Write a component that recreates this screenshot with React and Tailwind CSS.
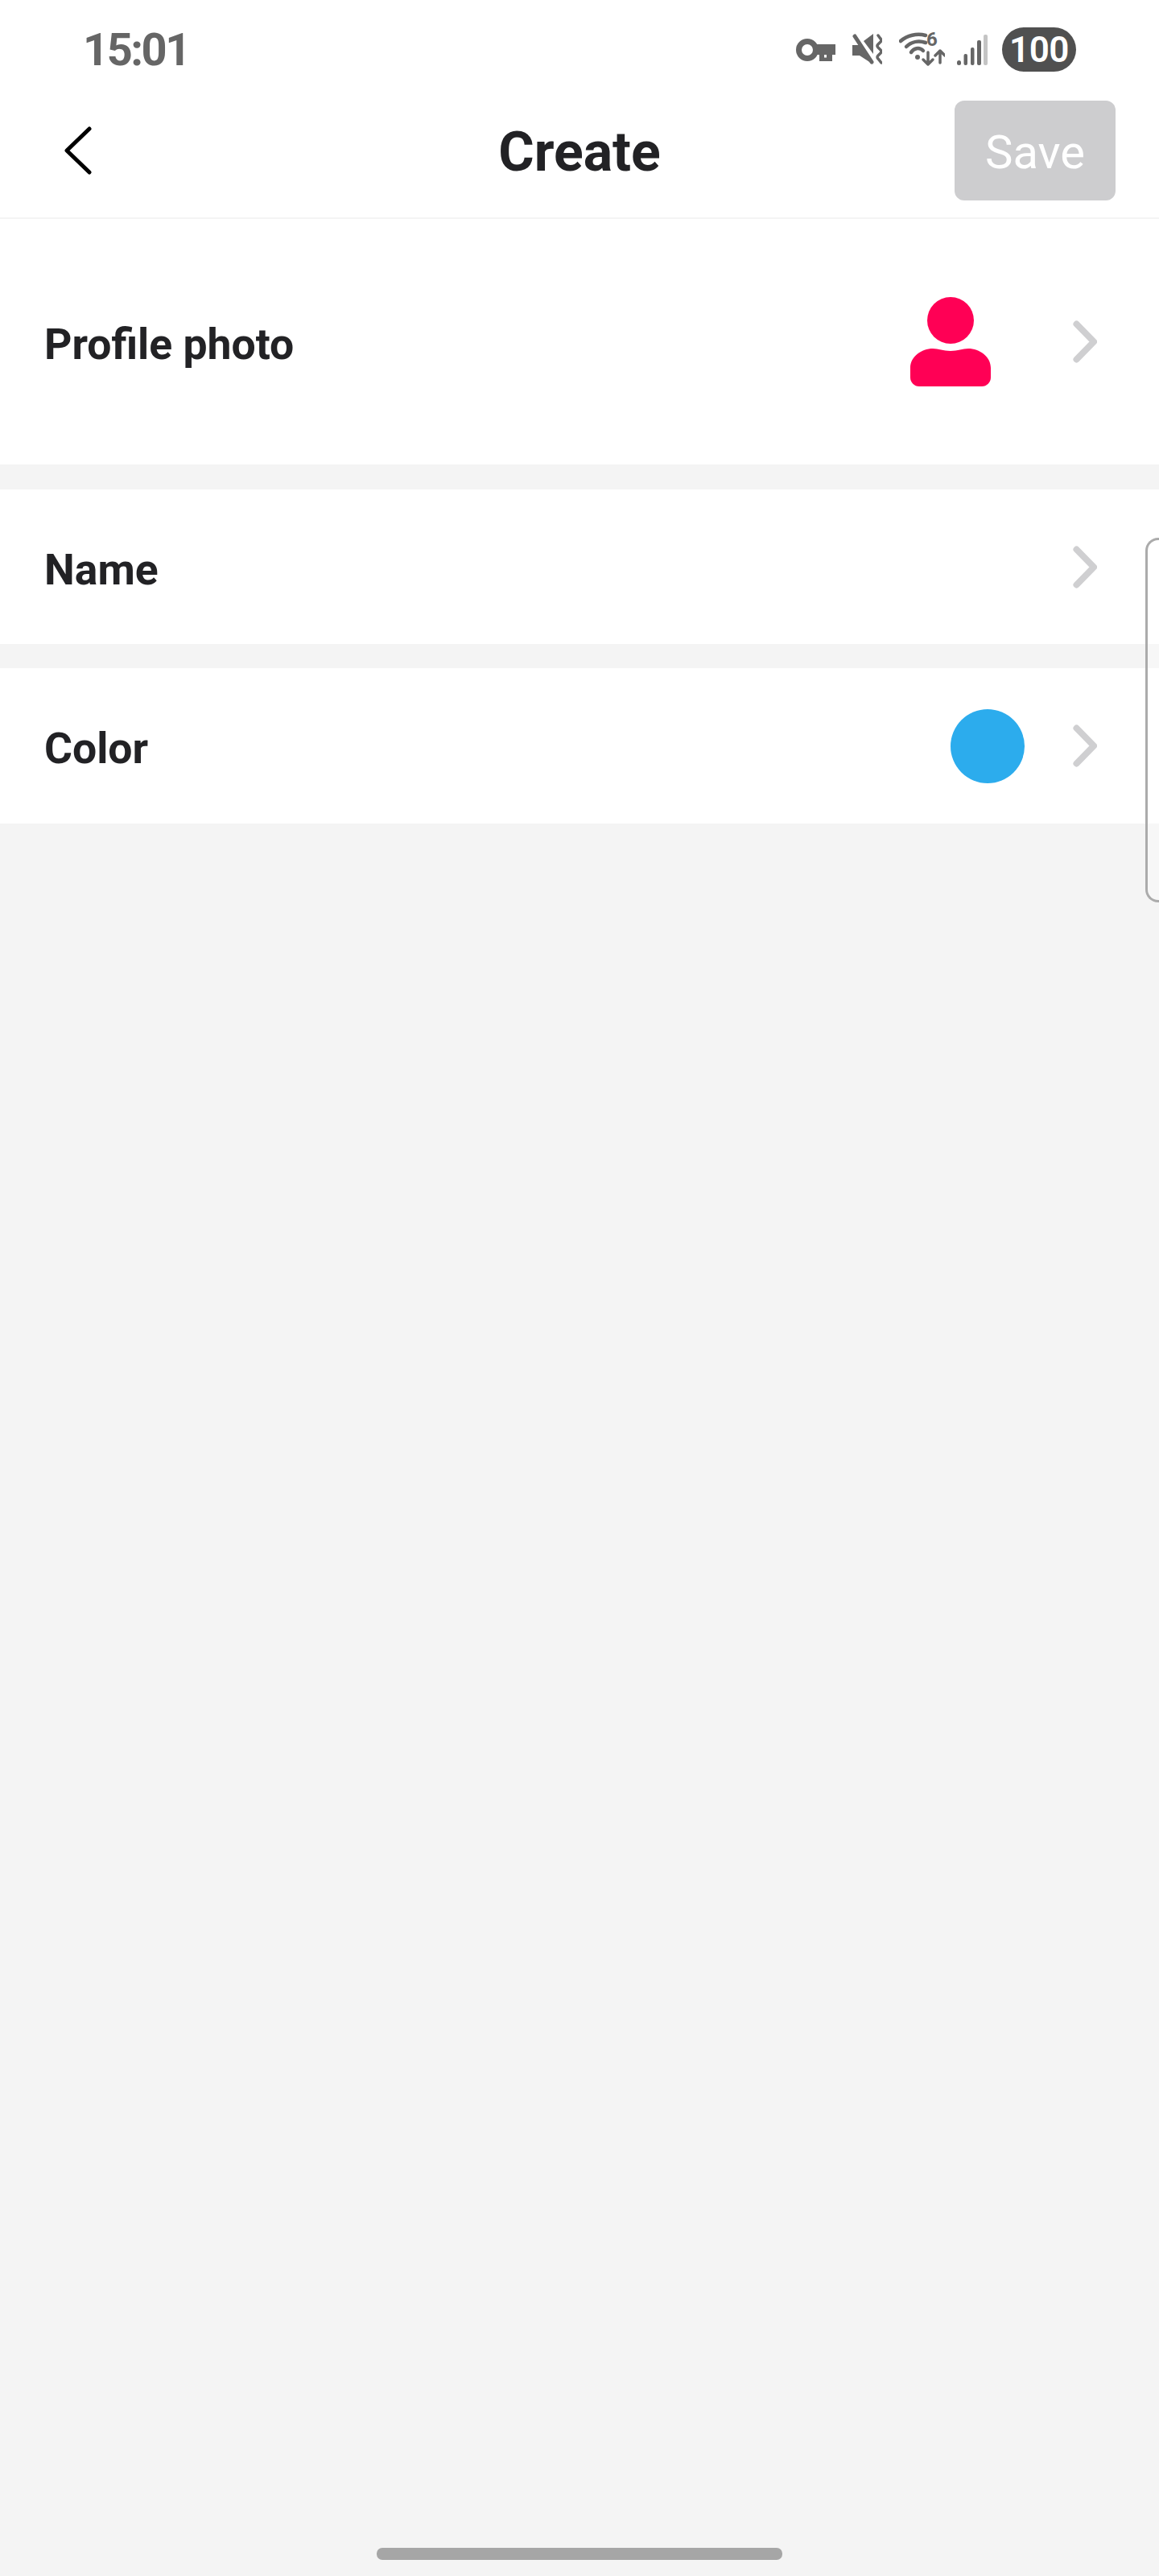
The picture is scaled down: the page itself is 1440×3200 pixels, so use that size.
import React from 'react'

const KeyIcon = () => (
  <svg width="49" height="28" viewBox="0 0 49 28" className="shrink-0">
    <circle cx="14" cy="14" r="10.5" fill="none" stroke="#666" strokeWidth="7" />
    <path d="M22 7H49V20H45V28H29V20H22Z" fill="#666" />
    <rect x="35" y="20" width="3" height="3.5" fill="#fff" />
  </svg>
)

const MuteIcon = () => (
  <svg width="38" height="39" viewBox="0 0 38 39" className="shrink-0">
    <path d="M15 9L27 0V25Z" fill="#666" />
    <path d="M1 14H10L27 38L10 27H1Z" fill="#666" strokeLinejoin="round" />
    <path d="M4 3L25 35" stroke="#666" strokeWidth="5" strokeLinecap="round" />
    <path d="M33 2L36 6Q38 8 36 10L33 13Q31 15 33 17L36 20Q38 22 36 24L33 27Q31 29 33 31L37 36" fill="none" stroke="#666" strokeWidth="3.5" strokeLinecap="round" />
  </svg>
)

const WifiIcon = () => (
  <div className="relative h-[43px] w-[57px] shrink-0">
    <svg width="57" height="43" viewBox="0 0 57 43">
      <path d="M2 11C10 4 22 1 33 4" fill="none" stroke="#666" strokeWidth="4.5" strokeLinecap="round" />
      <path d="M9 18C15 12 24 10 33 13" fill="none" stroke="#666" strokeWidth="4.5" strokeLinecap="round" />
      <path d="M15 25C18 20 25 18 30 23" fill="none" stroke="#666" strokeWidth="4.5" strokeLinecap="round" />
      <circle cx="23" cy="31" r="3" fill="#666" />
      <path d="M36 25V40M30 34L36 40L42 34" fill="none" stroke="#666" strokeWidth="3.5" strokeLinecap="round" strokeLinejoin="round" />
      <path d="M51 38V23M45 29L51 23L57 29" fill="none" stroke="#666" strokeWidth="3.5" strokeLinecap="round" strokeLinejoin="round" />
    </svg>
    <span className="absolute left-[34px] top-0 text-[24px] font-bold leading-[18px] text-[#666]">6</span>
  </div>
)

const SignalIcon = () => (
  <svg width="38" height="38" viewBox="0 0 38 38" className="shrink-0">
    <rect x="0" y="32" width="5" height="6" rx="2.5" fill="#666" />
    <rect x="8.5" y="24" width="4.5" height="14" rx="2" fill="#666" />
    <rect x="17" y="16" width="4.5" height="22" rx="2" fill="#666" />
    <rect x="25" y="7" width="5" height="31" rx="2" fill="#666" />
    <rect x="33" y="0" width="5" height="38" rx="2" fill="#c4c4c4" />
  </svg>
)

const PersonIcon = () => (
  <svg width="100" height="111" viewBox="0 0 100 111" className="shrink-0">
    <circle cx="50" cy="29" r="29" fill="#ff0055" />
    <path d="M0 88C0 74 14 64 28 64C35 64 41 67 50 67C59 67 65 64 72 64C86 64 100 74 100 88V100C100 106 95 111 89 111H11C5 111 0 106 0 100Z" fill="#ff0055" />
  </svg>
)

const RowChevron = () => (
  <svg width="30" height="53" viewBox="0 0 30 53" className="shrink-0">
    <path d="M4.5 4.5L26 26.5L4.5 48.5" fill="none" stroke="#cfcfd1" strokeWidth="8" strokeLinecap="round" strokeLinejoin="round" />
  </svg>
)

const Row = ({ label, height, children }) => (
  <div className={`flex items-center justify-between bg-white pl-[55px] pr-[77px] ${height}`}>
    <span className="pt-[8px] font-['Roboto',sans-serif] text-[53.5px] font-bold text-[#222225]">{label}</span>
    <div className="flex items-center">
      {children}
      <RowChevron />
    </div>
  </div>
)

const App = () => {
  return (
    <div className="relative flex h-[3200px] flex-col overflow-hidden bg-[#f4f4f4] font-['Roboto',sans-serif]">
      <div className="flex h-[104px] items-center justify-between bg-white pl-[103px] pr-[103px] pt-[19px]">
        <span className="text-[56px] font-bold tracking-[-2.5px] text-[#666]">15:01</span>
        <div className="flex items-center">
          <KeyIcon />
          <div className="ml-[20px]"><MuteIcon /></div>
          <div className="ml-[21px]"><WifiIcon /></div>
          <div className="ml-[15px]"><SignalIcon /></div>
          <div className="ml-[18px] flex h-[55px] w-[92px] items-center justify-center rounded-full bg-[#505050] text-[44px] font-semibold tracking-[-0.5px] text-white">100</div>
        </div>
      </div>

      <div className="grid h-[168px] grid-cols-[1fr_auto_1fr] items-center border-b-2 border-[#f4f4f4] bg-white">
        <div className="pl-[80px]">
          <svg width="34" height="60" viewBox="0 0 34 60">
            <path d="M31 3L3 30L31 57" fill="none" stroke="#000" strokeWidth="5" strokeLinecap="round" strokeLinejoin="round" />
          </svg>
        </div>
        <h1 className="pt-[4px] text-[68px] font-bold text-[#222225]">Create</h1>
        <div className="flex justify-end pr-[54px]">
          <button className="flex h-[124px] w-[200px] items-center justify-center rounded-[12px] bg-[#cdcdcf] pt-[4px] text-[58px] text-white">Save</button>
        </div>
      </div>

      <Row label="Profile photo" height="h-[305px]">
        <div className="mr-[102px]"><PersonIcon /></div>
      </Row>
      <div className="mt-[31px]">
        <Row label="Name" height="h-[192px]" />
      </div>
      <div className="mt-[30px]">
        <Row label="Color" height="h-[193px]">
          <div className="mr-[60px] size-[92px] rounded-full bg-[#2caced]" />
        </Row>
      </div>

      <div className="mt-auto flex justify-center pb-[20px]">
        <div className="h-[15px] w-[504px] rounded-[7px] bg-[#a6a6a6]" />
      </div>

      {/* edge panel handle */}
      <div className="absolute right-0 top-[668px] h-[453px] w-[17px] rounded-l-[16px] border-y-[3px] border-l-[3px] border-[#ababab] bg-white/30" />
    </div>
  )
}

export default App
